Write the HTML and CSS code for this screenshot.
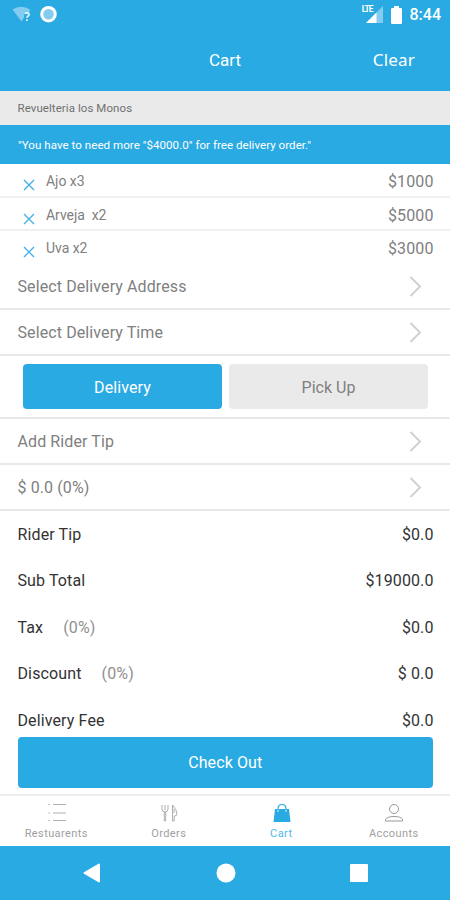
FILE: index.html
```html
<!DOCTYPE html>
<html lang="en">
<head>
<meta charset="utf-8">
<title>Cart</title>
<link rel="stylesheet" href="styles.css">
</head>
<body>
<div class="app">
  <div class="status">
    <svg class="status-left" width="50" height="20" viewBox="0 0 50 20">
      <path d="M0.5 4.5Q9 -1 18 4.5L17 8H12V12.5L9.5 16.5Z" fill="#83ccef"/>
      <path d="M13 9.2Q13.2 7.8 15 7.8Q17 7.8 17 9.5Q17 10.6 15.8 11.2Q15 11.7 15 12.8M15 14.2V16" fill="none" stroke="#e6f6fd" stroke-width="1.7"/>
      <circle cx="36.5" cy="9.2" r="6.8" fill="#83ccef" stroke="#fff" stroke-width="3"/>
    </svg>
    <div class="status-right">
      <span class="lte">LTE</span>
      <svg class="signal" width="17" height="17" viewBox="0 0 17 17"><path d="M17 0V17H0Z" fill="#83ccef"/><path d="M10.5 6.5V17H0Z" fill="#fff"/></svg>
      <svg class="battery" width="11" height="18" viewBox="0 0 11 18"><path d="M3 0H8V2H9.8Q11 2 11 3.2V16.8Q11 18 9.8 18H1.2Q0 18 0 16.8V3.2Q0 2 1.2 2H3Z" fill="#fff"/></svg>
      <span class="clock">8:44</span>
    </div>
  </div>
  <header class="header"><span></span><h1 class="title">Cart</h1><span class="clear">Clear</span></header>
  <div class="store"><span>Revuelteria los Monos</span></div>
  <div class="notice"><span>"You have to need more "$4000.0" for free delivery order."</span></div>
  <div class="items">
    <div class="item"><svg class="remove" width="12" height="12" viewBox="0 0 12 12"><path d="M1 1L11 11M11 1L1 11"/></svg><span class="name">Ajo x3</span><span class="price">$1000</span></div>
    <div class="item"><svg class="remove" width="12" height="12" viewBox="0 0 12 12"><path d="M1 1L11 11M11 1L1 11"/></svg><span class="name">Arveja&nbsp; x2</span><span class="price">$5000</span></div>
    <div class="item"><svg class="remove" width="12" height="12" viewBox="0 0 12 12"><path d="M1 1L11 11M11 1L1 11"/></svg><span class="name">Uva x2</span><span class="price">$3000</span></div>
  </div>
  <div class="option"><span>Select Delivery Address</span><svg class="chevron" width="13" height="21" viewBox="0 0 13 21"><path d="M1.5 1L11 10.5L1.5 20"/></svg></div>
  <div class="option"><span>Select Delivery Time</span><svg class="chevron" width="13" height="21" viewBox="0 0 13 21"><path d="M1.5 1L11 10.5L1.5 20"/></svg></div>
  <div class="modes"><button class="mode active">Delivery</button><button class="mode">Pick Up</button></div>
  <div class="option"><span>Add Rider Tip</span><svg class="chevron" width="13" height="21" viewBox="0 0 13 21"><path d="M1.5 1L11 10.5L1.5 20"/></svg></div>
  <div class="option"><span>$ 0.0 (0%)</span><svg class="chevron" width="13" height="21" viewBox="0 0 13 21"><path d="M1.5 1L11 10.5L1.5 20"/></svg></div>
  <div class="totals">
    <div class="total"><span>Rider Tip</span><span class="amount">$0.0</span></div>
    <div class="total"><span>Sub Total</span><span class="amount">$19000.0</span></div>
    <div class="total"><span>Tax <em class="rate">(0%)</em></span><span class="amount">$0.0</span></div>
    <div class="total"><span>Discount <em class="rate">(0%)</em></span><span class="amount">$ 0.0</span></div>
    <div class="total"><span>Delivery Fee</span><span class="amount">$0.0</span></div>
  </div>
  <button class="checkout">Check Out</button>
  <nav class="tabs">
    <div class="tab"><svg width="20" height="20" viewBox="0 0 20 20"><path d="M6 1.5H19M6 10H19M6 17.5H19M1.5 1.5H3M1.5 10H3M1.5 17.5H3" fill="none" stroke="#b0b0b0" stroke-width="1.2"/></svg><span>Restuarents</span></div>
    <div class="tab"><svg width="20" height="20" viewBox="0 0 20 20"><path d="M3 2V6Q3 9 6 9Q9 9 9 6V2M6 2V7M5.3 9V18H6.7V9M13.5 18V2Q18 7 18 11Q18 13 15.2 13V18H13.5M15 6V10" fill="none" stroke="#999" stroke-width=".8"/></svg><span>Orders</span></div>
    <div class="tab selected"><svg width="20" height="20" viewBox="0 0 20 20"><path d="M3 6H17L18.5 19H1.5Z" fill="#29aae3"/><path d="M6 9V6Q6 1.5 10 1.5Q14 1.5 14 6V9" fill="none" stroke="#29aae3" stroke-width="1.2"/><path d="M6 9V6.5M14 9V6.5" stroke="#d8f1fc" stroke-width="1"/></svg><span>Cart</span></div>
    <div class="tab"><svg width="20" height="20" viewBox="0 0 20 20"><circle cx="10" cy="6" r="4.5" fill="none" stroke="#999"/><path d="M1.5 18V16.5Q3 13.5 10 13.5Q17 13.5 18.5 16.5V18Z" fill="none" stroke="#999"/></svg><span>Accounts</span></div>
  </nav>
  <div class="system">
    <svg width="18" height="20" viewBox="0 0 18 20"><path d="M16 1.5V18.5L1.5 10Z" fill="#fff" stroke="#fff" stroke-width="2" stroke-linejoin="round"/></svg>
    <svg width="20" height="20" viewBox="0 0 20 20"><circle cx="10" cy="10" r="9.5" fill="#fff"/></svg>
    <svg width="18" height="20" viewBox="0 0 18 20"><rect y="1" width="18" height="18" rx="1" fill="#fff"/></svg>
  </div>
</div>
</body>
</html>
```
FILE: styles.css
```css
* { box-sizing: border-box; }
body { margin: 0; background: #fff; font-family: Roboto, sans-serif; font-size: 16px; color: #808080; }
svg { display: block; flex: none; }
button { border: 0; padding: 0; font: inherit; }
.app { width: 450px; height: 900px; display: flex; flex-direction: column; overflow: hidden; }
.app > * { flex: none; }
.status { height: 30px; background: #29aae3; display: flex; justify-content: space-between; padding: 5px 9px 0 12px; color: #fff; }
.status-right { display: flex; align-items: flex-start; }
.lte { font-size: 8.5px; font-weight: 700; line-height: 9px; letter-spacing: -1px; margin-right: -7px; }
.signal { margin: 1px 8px 0 0; }
.battery { margin: 1px 8px 0 0; }
.clock { font-size: 16px; font-weight: 500; line-height: 20px; }
.header { height: 61px; background: #29aae3; color: #fff; display: grid; grid-template-columns: 1fr auto 1fr; align-items: center; padding: 0 35px 2px; }
.title { margin: 0; font-size: 17px; font-weight: 400; }
.clear { justify-self: end; font-family: "Noto Sans", sans-serif; font-size: 17px; letter-spacing: .2px; }
.store { height: 34px; background: #eaeaea; padding: 0 0 0 17.5px; display: flex; align-items: center; font-size: 11.5px; color: #707070; letter-spacing: .07px; }
.notice { height: 39px; background: #29aae3; color: #fff; padding: 1px 0 0 18px; display: flex; align-items: center; font-size: 11.6px; letter-spacing: .02px; }
.items { height: 100px; }
.item { height: 33.5px; display: flex; padding: 0 16.5px 0 23px; line-height: 35px; border-bottom: 2px solid #f0f0f0; }
.item:last-child { border: 0; }
.remove { margin: 15px 11px 0 0; fill: none; stroke: #45b1e5; stroke-width: 1.4; }
.name { flex: 1; font-size: 14px; line-height: 34px; letter-spacing: -.05px; }
.price { font-size: 16px; letter-spacing: .1px; }
.option { height: 46px; padding: 1px 28px 0 17.5px; display: flex; align-items: center; justify-content: space-between; border-bottom: 2px solid #e8e8e8; letter-spacing: .1px; }
.chevron { fill: none; stroke: #d0d0d0; stroke-width: 2; }
.modes { height: 63px; border-bottom: 2px solid #e8e8e8; display: grid; grid-template-columns: 199px 199px; gap: 7px; padding: 8px 0 8px 23px; }
.mode { background: #eaeaea; border-radius: 4px; color: #808080; padding-top: 1px; }
.active { background: #29aae3; color: #fff; letter-spacing: .1px; }
.totals { height: 226px; padding: 0 16.5px 0 17.5px; color: #333; letter-spacing: .12px; }
.total { height: 46.5px; display: flex; justify-content: space-between; align-items: center; }
.amount { letter-spacing: .1px; }
.rate { font-style: normal; color: #909090; margin-left: 16px; }
.checkout { height: 51px; margin: 0 17px 0 17.5px; background: #29aae3; color: #fff; border-radius: 4px; letter-spacing: .1px; }
.tabs { height: 52px; margin-top: 6px; border-top: 2px solid #ededed; display: grid; grid-template-columns: repeat(4, 1fr); }
.tab { display: flex; flex-direction: column; align-items: center; padding-top: 7px; font-size: 11px; letter-spacing: .4px; color: #a0a0a0; }
.tab svg { margin-left: 1px; }
.tab span { margin-top: 4px; line-height: 13px; }
.selected { color: #52b9e8; }
.system { height: 54px; background: #29aae3; display: flex; align-items: center; justify-content: space-between; padding: 0 82px 0 83px; }
```
